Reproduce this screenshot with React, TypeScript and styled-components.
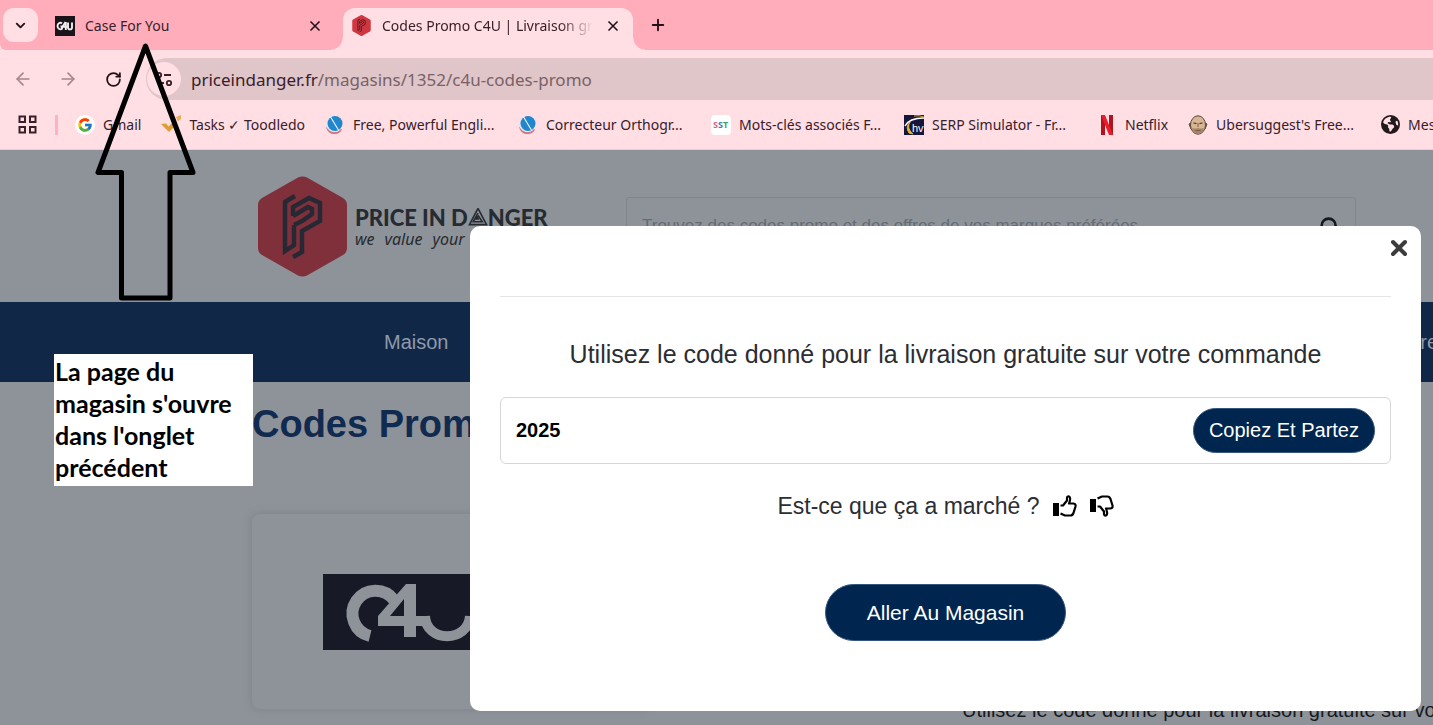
import React from "react";
import styled, { createGlobalStyle, css } from "styled-components";
import { FcGoogle } from "react-icons/fc";
import { FaEarthAmericas } from "react-icons/fa6";
import { ArrowLeft, ArrowRight, ChevronDown, Plus, RotateCw, Search, X } from "lucide-react";

const GlobalStyle = createGlobalStyle`
  *, *::before, *::after { box-sizing: border-box; }
  body { margin: 0; background: #8e939a; font-family: "Liberation Sans", Arial, sans-serif; overflow-x: hidden; }
  button { font: inherit; border: 0; padding: 0; cursor: pointer; }
  a { color: inherit; text-decoration: none; }
`;

const Shell = styled.div`
  position: relative;
  display: flex;
  flex-direction: column;
  min-height: 100vh;
  overflow: hidden;
`;

/* ---------- browser chrome ---------- */

const Chrome = styled.header`
  font-family: "Noto Sans", "Open Sans", sans-serif;
  font-size: 14px;
  color: #38202a;
  background: #ffdee4;
`;

const TabStrip = styled.div`
  display: flex;
  height: 50px;
  padding: 8px 0 0 3px;
  background: #ffadbb;
  border-bottom-left-radius: 6px;
`;

const TabMenu = styled.button`
  display: grid;
  place-items: center;
  width: 35px;
  height: 34px;
  border-radius: 11px;
  background: #ffdee4;
  color: #201216;
`;

const Tab = styled.div<{ $active?: boolean }>`
  position: relative;
  display: flex;
  align-items: center;
  height: 42px;
  width: 297px;
  padding: 0 10px 7px 17px;
  gap: 10px;
  ${(p) =>
    p.$active &&
    css`
      width: 290px;
      margin-left: 8px;
      padding-left: 8px;
      background: #ffdee4;
      border-radius: 12px 12px 0 0;
      &::before, &::after {
        content: "";
        position: absolute;
        bottom: 0;
        width: 12px;
        height: 12px;
      }
      &::before { left: -12px; background: radial-gradient(circle at 0 0, #ffadbb 11px, #ffdee4 12px); }
      &::after { right: -12px; background: radial-gradient(circle at 100% 0, #ffadbb 11px, #ffdee4 12px); }
    `}
`;

const TabTitle = styled.a<{ $fade?: boolean }>`
  flex: 1;
  overflow: hidden;
  white-space: nowrap;
  line-height: 24px;
  ${(p) => p.$fade && css`mask-image: linear-gradient(to right, #000 84%, transparent 100%);`}
`;

const IconButton = styled.button<{ $muted?: boolean }>`
  display: grid;
  place-items: center;
  width: 20px;
  height: 24px;
  background: none;
  color: ${(p) => (p.$muted ? "#a8848c" : "#201216")};
`;

const NewTab = styled(IconButton)`
  margin: 5px 0 0 15px;
`;

const Toolbar = styled.div`
  display: flex;
  align-items: center;
  height: 50px;
  padding: 8px 0 0 13px;
`;

const NavButtons = styled.div`
  display: flex;
  gap: 25px;
  width: 133px;
`;

const Address = styled.div`
  display: flex;
  flex: 1;
  align-items: center;
  gap: 10px;
  height: 42px;
  padding-left: 1px;
  border-radius: 21px 0 0 21px;
  background: #e0c5c9;
  font-size: 17px;
  color: #786267;
  white-space: nowrap;
  b { font-weight: 400; color: #38202a; }
`;

const SiteInfo = styled.button`
  display: grid;
  place-items: center;
  width: 34px;
  height: 34px;
  border-radius: 17px;
  background: #ffdee4;
  color: #38202a;
`;

const Bookmarks = styled.nav`
  display: flex;
  align-items: center;
  height: 50px;
  padding-left: 18px;
  border-bottom: 1px solid #f0ccd3;
  overflow: hidden;
  > * { flex: none; }
`;

const Divider = styled.span`
  width: 3px;
  height: 20px;
  margin: 0 17px 0 18px;
  background: #ffb3c0;
`;

const Bookmark = styled.a<{ $long?: boolean }>`
  display: flex;
  align-items: center;
  gap: 8px;
  width: ${(p) => (p.$long ? "193px" : "auto")};
  padding-right: ${(p) => (p.$long ? 0 : 20)}px;
  white-space: nowrap;
  svg { flex: none; }
`;

/* ---------- store page ---------- */

const Page = styled.div`
  position: relative;
  flex: 1;
  background: #8e939a;
`;

const SiteHeader = styled.div`
  display: flex;
  align-items: flex-start;
  height: 152px;
  padding: 26px 77px 0 258px;
`;

const Brand = styled.a`
  display: flex;
  gap: 8px;
  width: 368px;
  color: #262b31;
`;

const BrandText = styled.div`
  padding-top: 29px;
`;

const BrandName = styled.div`
  display: flex;
  align-items: baseline;
  font: 900 22px/26px Lato, "Liberation Sans", sans-serif;
  white-space: pre;
`;

const Tagline = styled.div`
  display: flex;
  gap: 10px;
  font: italic 400 16px/16px "Noto Sans", sans-serif;
`;

const SearchBox = styled.label`
  display: flex;
  flex: 1;
  align-items: center;
  height: 58px;
  margin-top: 21px;
  padding: 0 15px;
  border: 1px solid #7f858b;
  border-radius: 3px;
  color: #14171b;
`;

const SearchInput = styled.input`
  flex: 1;
  min-width: 0;
  border: 0;
  outline: 0;
  padding: 0;
  background: none;
  font: 17px/24px "Liberation Sans", sans-serif;
  &::placeholder { color: #646b74; opacity: 1; }
`;

const MainNav = styled.nav`
  display: flex;
  align-items: center;
  justify-content: space-between;
  height: 80px;
  padding-left: 384px;
  margin-right: -15px;
  background: #112747;
  color: #8e9aab;
  font-size: 20px;
  line-height: 24px;
`;

const PageTitle = styled.h1`
  margin: 0;
  padding: 20px 0 68px 252px;
  font-size: 38px;
  line-height: 44px;
  color: #112a4f;
`;

const StoreRow = styled.div`
  display: flex;
  padding: 0 0 16px 252px;
`;

const StoreCard = styled.div`
  flex: none;
  width: 400px;
  height: 195px;
  padding: 60px 71px;
  border-radius: 8px;
  box-shadow: 0 0 8px rgba(90, 96, 100, 0.35);
`;

const OfferText = styled.p`
  align-self: flex-end;
  margin: 0 0 -12px 310px;
  font-size: 20px;
  line-height: 22px;
  color: #16191d;
  white-space: nowrap;
`;

/* ---------- code dialog ---------- */

const Dialog = styled.section`
  position: absolute;
  top: 76px;
  left: 470px;
  right: 12px;
  height: 485px;
  padding: 0 30px;
  border-radius: 10px;
  background: #fff;
  text-align: center;
  color: #2b2e33;
`;

const DialogTop = styled.div`
  display: flex;
  justify-content: flex-end;
  height: 71px;
  margin-bottom: 42px;
  padding-top: 10px;
  border-bottom: 1px solid #e5e5e5;
`;

const CloseButton = styled.button`
  width: 24px;
  height: 24px;
  margin-right: -20px;
  background: none;
  color: #3c3c3c;
`;

const DialogTitle = styled.h2`
  margin: 0 0 28px;
  font-size: 25px;
  font-weight: 400;
  line-height: 30px;
`;

const CodeBox = styled.div`
  display: flex;
  align-items: center;
  justify-content: space-between;
  height: 67px;
  padding: 0 15px;
  border: 1px solid #d6d6d6;
  border-radius: 6px;
  color: #000;
  font-size: 20px;
`;

const Pill = styled.button<{ $large?: boolean }>`
  height: ${(p) => (p.$large ? 57 : 45)}px;
  padding: 0 ${(p) => (p.$large ? 41 : 15)}px;
  border: 1px solid #35557c;
  border-radius: 29px;
  background: #00264f;
  color: #fff;
  font-size: ${(p) => (p.$large ? 21 : 20)}px;
`;

const Feedback = styled.div`
  display: flex;
  justify-content: center;
  align-items: center;
  gap: 13px;
  margin: 28px 0 64px;
  font-size: 23px;
  line-height: 28px;
`;

const Vote = styled.button`
  display: block;
  width: 24px;
  height: 24px;
  background: none;
  color: #000;
`;

/* ---------- annotations ---------- */

const Arrow = styled.svg`
  position: absolute;
  top: 40px;
  left: 90px;
  pointer-events: none;
`;

const Note = styled.p`
  position: absolute;
  top: 354px;
  left: 54px;
  width: 199px;
  margin: 0;
  padding: 1px 0 3px 1px;
  background: #fff;
  color: #000;
  font: 700 25px/32px Lato, sans-serif;
`;

/* ---------- drawings ---------- */

const C4UMark = () => (
  <svg width="258" height="76" viewBox="0 0 258 76">
    <rect width="258" height="76" fill="#171926" />
    <g fill="none" stroke="#8e939a">
      <path d="M47 62A23 23 0 1 1 71 26" strokeWidth="12" />
      <path d="M102 42C103 69 145 69 147 42" strokeWidth="10" />
    </g>
    <path d="M83 10H93V42H106V52H93V63H81V52H55V42ZM81 25L67 42H81Z" fill="#8e939a" fillRule="evenodd" />
  </svg>
);

const C4UFavicon = () => (
  <svg width="20" height="20" viewBox="0 0 20 20">
    <rect width="20" height="20" fill="#191419" />
    <g fill="none" stroke="#f2eef0" strokeWidth="1.9">
      <path d="M7 7.4C5.500 6 2.500 7 2.500 10S5.500 14 7 12.800V10.500H5.500" />
      <path d="M10.500 6L7.600 10.800H12M10.800 6V14" />
      <path d="M13 6.500V11.500C13 14 17 14 17 11.500V6.500" />
    </g>
  </svg>
);

const HexLogo = ({ width, height, red, ink }: { width: number; height: number; red: string; ink: string }) => (
  <svg width={width} height={height} viewBox="0 0 89 101">
    <path
      d="M40 1.500Q44.500 -0.500 49 1.500L85 22Q89 24.500 89 29V72Q89 76.500 85 79L49 99.500Q44.500 101.500 40 99.500L4 79Q0 76.500 0 72V29Q0 24.500 4 22Z"
      fill={red}
    />
    <g fill="none" stroke={ink} strokeWidth="4.500">
      <path d="M37 20L27 26V75L36 69V49" />
      <path d="M35 40V31L51 22L62 27V45L44 55V76L35 81" />
      <path d="M35 40L50 31L54 33V38L44 45L36 49" />
    </g>
  </svg>
);

const GridIcon = () => (
  <svg width="19" height="19" viewBox="0 0 19 19" fill="none" stroke="#38202a" strokeWidth="2">
    <rect x="1.500" y="1.500" width="5.500" height="5.500" />
    <rect x="12" y="1.500" width="5.500" height="5.500" />
    <rect x="1.500" y="12" width="5.500" height="5.500" />
    <rect x="12" y="12" width="5.500" height="5.500" />
  </svg>
);

const TuneIcon = () => (
  <svg width="18" height="18" viewBox="0 0 18 18" fill="none" stroke="currentColor" strokeWidth="1.800">
    <circle cx="4" cy="5" r="2.200" />
    <path d="M9 5H16M2 13H9" />
    <circle cx="14" cy="13" r="2.200" />
  </svg>
);

const GmailIcon = () => (
  <svg width="20" height="20" viewBox="0 0 20 20">
    <circle cx="10" cy="10" r="10" fill="#fff" />
    <FcGoogle x="2" y="2" width="16" height="16" size={16} />
  </svg>
);

const CheckIcon = () => (
  <svg width="20" height="20" viewBox="0 0 20 20">
    <path d="M0 9L5 8.500L7.500 11.500L13 6L16 9L8 17Z" fill="#dc9d32" />
    <path d="M15 2L20 0V4L17 6.500Z" fill="#e6b154" />
  </svg>
);

const QuillIcon = () => (
  <svg width="20" height="20" viewBox="0 0 20 20">
    <path d="M1 12Q3 20 11 19Q16 18 17 14L11 16Z" fill="#d4707f" />
    <path d="M2 7Q0 13 5 16Q11 19 15 15L8 12Z" fill="#dbe6f5" />
    <circle cx="10" cy="8.500" r="7.500" fill="#2187cd" />
    <path d="M5 1L14 16" stroke="#e6f2fb" strokeWidth="1.200" />
  </svg>
);

const SstIcon = () => (
  <svg width="20" height="20" viewBox="0 0 20 20" fontFamily="Noto Sans" fontSize="9" fontWeight="700">
    <rect width="20" height="20" rx="4" fill="#fff" />
    <text x="2" y="13" fill="#cf6684">S<tspan fill="#4676a8">S</tspan><tspan fill="#3fa27e">T</tspan></text>
  </svg>
);

const HvIcon = () => (
  <svg width="20" height="20" viewBox="0 0 20 20">
    <rect width="20" height="20" fill="#16163a" />
    <path d="M1 11Q5 3 20 3" fill="none" stroke="#fff" strokeWidth="1.500" />
    <path d="M6 7Q2 13 9 19L5 18Q1 12 6 7Z" fill="#e6b32e" stroke="#e6b32e" />
    <path d="M10 1Q15 0 20 2" fill="none" stroke="#d9a92e" />
    <text x="8" y="17" fill="#fff" fontFamily="Liberation Sans" fontSize="11">hv</text>
  </svg>
);

const NetflixIcon = () => (
  <svg width="20" height="20" viewBox="0 0 20 20">
    <path d="M4 0H8V20L4 20ZM12 0H16V20H12Z" fill="#b3131c" />
    <path d="M4 0H8L16 20H12Z" fill="#e51f2b" />
  </svg>
);

const FaceIcon = () => (
  <svg width="20" height="20" viewBox="0 0 20 20">
    <path d="M3 8L1 9L3 14M17 8L19 9L17 14" fill="#d9b692" stroke="#55453b" />
    <ellipse cx="10" cy="10" rx="7.500" ry="9.200" fill="#d9b692" stroke="#55453b" />
    <path d="M5.500 8L8.500 8.500M11.500 8.500L14.500 8" stroke="#3a2c26" strokeWidth="1.200" />
    <path d="M4 13Q5 18.500 10 19Q15 18.500 16 13Q13 14 10 13Q7 14 4 13Z" fill="#a58468" />
    <path d="M10 8V12M7.500 15.500H12.500" stroke="#7b5a48" />
  </svg>
);

const PenroseA = () => (
  <svg width="20" height="19" viewBox="0 0 21 20" fill="none" stroke="#262b31" strokeWidth="1.700">
    <path d="M10.500 1.500L19.500 18.500H1.500L10.500 1.500M10.500 6.500L5.500 15.500H15L11 9.500L8.500 12.500H11.500" />
  </svg>
);

const ThumbIcon = ({ down }: { down?: boolean }) => (
  <svg width="24" height="24" viewBox="0 0 24 24">
    <path d={down ? "M0 5H6V18H0Z" : "M0 9H6V22H0Z"} fill="currentColor" />
    <g transform={down ? "translate(0 24) scale(1 -1)" : undefined}>
      <path
        d="M7.500 11.500H10L14 6.500V4Q14.200 2 16 2.500Q18 3.500 16.500 8L16 9.500H20.500Q23 10 22.500 12.500L20.500 19Q19.500 21.500 17.500 21.500H12L7.500 19.500"
        fill="none"
        stroke="currentColor"
        strokeWidth="2.200"
        strokeLinejoin="round"
      />
    </g>
  </svg>
);

const bookmarks = [
  { label: "Gmail", icon: <GmailIcon /> },
  { label: "Tasks ✓ Toodledo", icon: <CheckIcon /> },
  { label: "Free, Powerful Engli...", icon: <QuillIcon />, long: true },
  { label: "Correcteur Orthogr...", icon: <QuillIcon />, long: true },
  { label: "Mots-clés associés F...", icon: <SstIcon />, long: true },
  { label: "SERP Simulator - Fr...", icon: <HvIcon />, long: true },
  { label: "Netflix", icon: <NetflixIcon /> },
  { label: "Ubersuggest's Free...", icon: <FaceIcon />, long: true },
  { label: "Mes", icon: <FaEarthAmericas size={19} color="#201a1d" /> },
];

export default function App() {
  return (
    <Shell>
      <GlobalStyle />
      <Chrome>
        <TabStrip>
          <TabMenu aria-label="Onglets">
            <ChevronDown size={15} strokeWidth={3} />
          </TabMenu>
          <Tab>
            <C4UFavicon />
            <TabTitle href="#">Case For You</TabTitle>
            <IconButton aria-label="Fermer">
              <X size={16} strokeWidth={2.5} />
            </IconButton>
          </Tab>
          <Tab $active>
            <HexLogo width={21} height={21} red="#cf3640" ink="#5a1a20" />
            <TabTitle href="#" $fade>
              Codes Promo C4U | Livraison gratuite
            </TabTitle>
            <IconButton aria-label="Fermer">
              <X size={16} strokeWidth={2.5} />
            </IconButton>
          </Tab>
          <NewTab aria-label="Nouvel onglet">
            <Plus size={18} strokeWidth={2.5} />
          </NewTab>
        </TabStrip>
        <Toolbar>
          <NavButtons>
            <IconButton $muted aria-label="Précédent">
              <ArrowLeft size={20} />
            </IconButton>
            <IconButton $muted aria-label="Suivant">
              <ArrowRight size={20} />
            </IconButton>
            <IconButton aria-label="Actualiser">
              <RotateCw size={17} strokeWidth={2.5} />
            </IconButton>
          </NavButtons>
          <Address>
            <SiteInfo aria-label="Informations du site">
              <TuneIcon />
            </SiteInfo>
            <span>
              <b>priceindanger.fr</b>/magasins/1352/c4u-codes-promo
            </span>
          </Address>
        </Toolbar>
        <Bookmarks>
          <GridIcon />
          <Divider />
          {bookmarks.map((b) => (
            <Bookmark key={b.label} href="#" $long={b.long}>
              {b.icon}
              {b.label}
            </Bookmark>
          ))}
        </Bookmarks>
      </Chrome>

      <Page>
        <SiteHeader>
          <Brand href="#">
            <HexLogo width={89} height={101} red="#80303a" ink="#262934" />
            <BrandText>
              <BrandName>
                PRICE IN D<PenroseA />NGER
              </BrandName>
              <Tagline>
                <span>we</span>
                <span>value</span>
                <span>your</span>
              </Tagline>
            </BrandText>
          </Brand>
          <SearchBox>
            <SearchInput placeholder="Trouvez des codes promo et des offres de vos marques préférées" />
            <Search size={21} strokeWidth={3} />
          </SearchBox>
        </SiteHeader>
        <MainNav>
          <a href="#">Maison</a>
          <a href="#">Offres</a>
        </MainNav>
        <PageTitle>Codes Promo C4U</PageTitle>
        <StoreRow>
          <StoreCard>
            <C4UMark />
          </StoreCard>
          <OfferText>Utilisez le code donné pour la livraison gratuite sur votre commande</OfferText>
        </StoreRow>

        <Dialog role="dialog" aria-labelledby="dialog-title">
          <DialogTop>
            <CloseButton aria-label="Fermer">
              <X size={24} strokeWidth={4} />
            </CloseButton>
          </DialogTop>
          <DialogTitle id="dialog-title">
            Utilisez le code donné pour la livraison gratuite sur votre commande
          </DialogTitle>
          <CodeBox>
            <strong>2025</strong>
            <Pill>Copiez Et Partez</Pill>
          </CodeBox>
          <Feedback>
            <span>Est-ce que ça a marché ?</span>
            <Vote aria-label="Oui">
              <ThumbIcon />
            </Vote>
            <Vote aria-label="Non">
              <ThumbIcon down />
            </Vote>
          </Feedback>
          <Pill $large>Aller Au Magasin</Pill>
        </Dialog>
      </Page>

      <Arrow width="110" height="265" viewBox="90 40 110 265" fill="none" stroke="#000" strokeWidth="5" strokeLinejoin="round">
        <path d="M145.500 46L98 172.500H121.500V298H170V172.500H193Z" />
      </Arrow>
      <Note>La page du magasin s'ouvre dans l'onglet précédent</Note>
    </Shell>
  );
}
